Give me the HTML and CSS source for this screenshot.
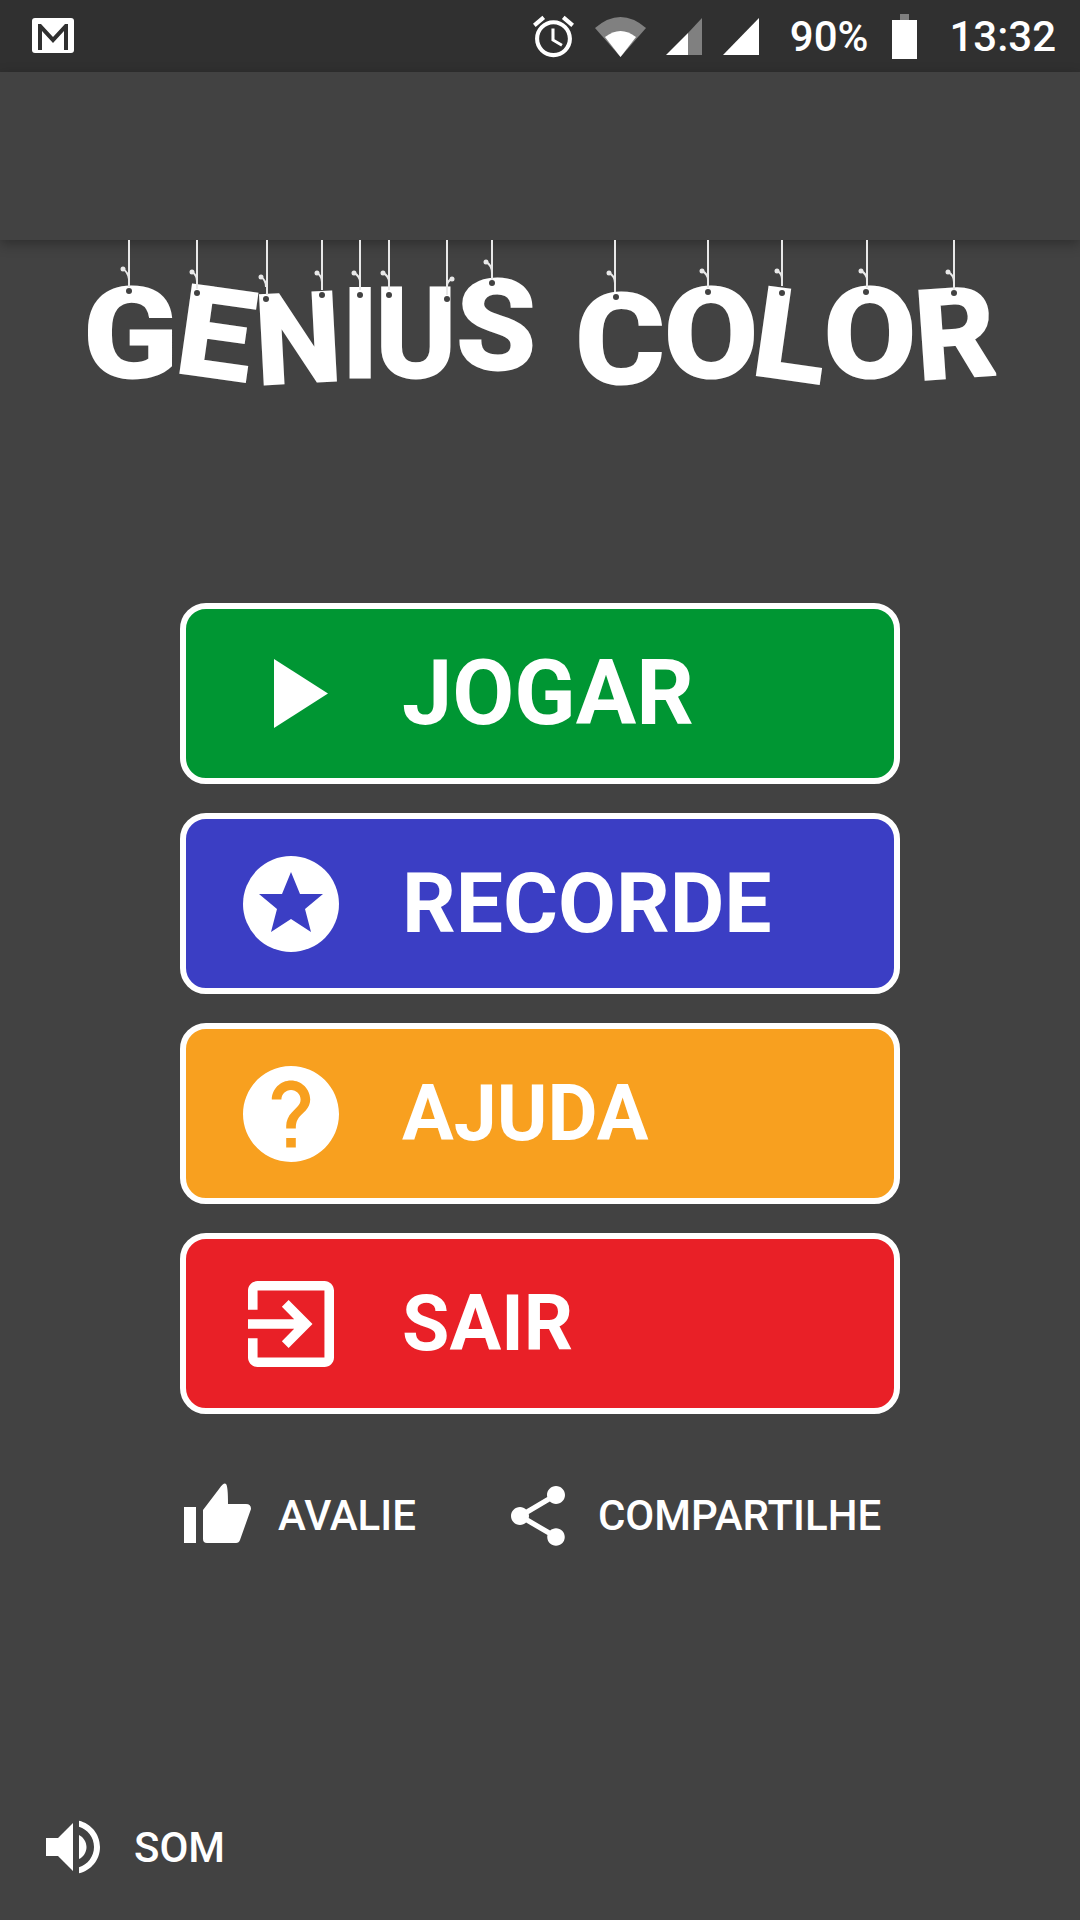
FILE: index.html
```html
<!DOCTYPE html>
<html lang="pt-BR">
<head>
    <meta charset="UTF-8">
    <meta name="viewport" content="width=device-width, initial-scale=1.0">
    <title>Genius Color</title>
    <link rel="stylesheet" href="styles.css">
</head>
<body>

    <!-- Status bar -->
    <div class="status-bar">
        <svg class="icon-gmail" viewBox="0 0 42 35">
            <rect width="42" height="35" rx="3" fill="#fff"/>
            <path d="M6 32V6h3l12 13L33 6h3v26h-4V13L21 25 10 13v19z" fill="#303030"/>
        </svg>
        <div class="status-right">
            <svg class="icon-alarm" viewBox="2 1.86 20 20.14">
                <path fill="#fff" d="M22 5.72l-4.6-3.86-1.29 1.53 4.6 3.86L22 5.72zM7.88 3.39L6.6 1.86 2 5.71l1.29 1.53 4.59-3.85zM12.5 8H11v6l4.75 2.85.75-1.23-4-2.37V8zM12 4c-4.97 0-9 4.03-9 9s4.03 9 9 9c4.97 0 9-4.03 9-9s-4.03-9-9-9zm0 16c-3.87 0-7-3.13-7-7s3.13-7 7-7 7 3.13 7 7-3.13 7-7 7z"/>
            </svg>
            <svg class="icon-wifi" viewBox="0 0 51 42">
                <path fill="#808080" d="M25.5 42L0 13Q25.5 -9 51 13z"/>
                <path fill="#fff" d="M25.5 42L10 22Q25.5 10 41 22z"/>
            </svg>
            <svg class="icon-signal" viewBox="0 0 36 37">
                <path fill="#808080" d="M36 0v37H22V15z"/>
                <path fill="#fff" d="M0 37L22 15v22z"/>
            </svg>
            <svg class="icon-signal" viewBox="0 0 36 37">
                <path fill="#fff" d="M0 37L36 0v37z"/>
            </svg>
            <span class="status-battery">90%</span>
            <svg class="icon-battery" viewBox="0 0 25 45">
                <path fill="#808080" d="M8 0h9v7H8z"/>
                <rect y="6" width="25" height="39" fill="#fff"/>
            </svg>
            <span class="status-time">13:32</span>
        </div>
    </div>

    <div class="app-bar"></div>

    <!-- Hanging letters logo -->
    <h1 class="logo">
        <span class="letter letter-g">G</span>
        <span class="letter letter-e">E</span>
        <span class="letter letter-n">N</span>
        <span class="letter letter-i">I</span>
        <span class="letter letter-u">U</span>
        <span class="letter letter-s">S</span>
        <span class="letter letter-c">C</span>
        <span class="letter letter-o">O</span>
        <span class="letter letter-l">L</span>
        <span class="letter letter-o2">O</span>
        <span class="letter letter-r">R</span>
        <svg class="threads" viewBox="0 240 1080 160">
            <g class="strings">
                <path d="M129 240V287M129 279Q128 272 123 269"/>
                <path d="M197 240V289M197 281Q197 275 192 272"/>
                <path d="M267 240V295M266 287Q266 280 261 277"/>
                <path d="M322 240V290M322 282Q322 276 317 273"/>
                <path d="M360 240V290M360 282Q360 276 354 273"/>
                <path d="M389 240V290M389 282Q389 276 383 273"/>
                <path d="M447 240V295M447 286Q447 281 452 279"/>
                <path d="M492 240V281M492 273Q492 265 486 262"/>
                <path d="M615 240V292M615 283Q615 276 609 273"/>
                <path d="M708 240V288M708 280Q708 274 702 271"/>
                <path d="M782 240V286M782 279Q782 273 777 271"/>
                <path d="M867 240V288M867 280Q867 274 861 271"/>
                <path d="M954 240V290M954 282Q954 275 948 272"/>
            </g>
            <g class="knots">
                <circle cx="123" cy="269" r="2.5"/><circle cx="192" cy="272" r="2.5"/>
                <circle cx="261" cy="277" r="2.5"/><circle cx="317" cy="273" r="2.5"/>
                <circle cx="354" cy="273" r="2.5"/><circle cx="383" cy="273" r="2.5"/>
                <circle cx="452" cy="279" r="2.5"/><circle cx="486" cy="262" r="2.5"/>
                <circle cx="609" cy="273" r="2.5"/><circle cx="702" cy="271" r="2.5"/>
                <circle cx="777" cy="271" r="2.5"/><circle cx="861" cy="271" r="2.5"/>
                <circle cx="948" cy="272" r="2.5"/>
            </g>
            <g class="holes">
                <circle cx="129" cy="291" r="3"/><circle cx="197" cy="293" r="3"/>
                <circle cx="266" cy="299" r="3"/><circle cx="322" cy="295" r="3"/>
                <circle cx="360" cy="295" r="3"/><circle cx="389" cy="295" r="3"/>
                <circle cx="447" cy="299" r="3"/><circle cx="492" cy="283" r="3"/>
                <circle cx="616" cy="297" r="3"/><circle cx="708" cy="292" r="3"/>
                <circle cx="782" cy="293" r="3"/><circle cx="866" cy="292" r="3"/>
                <circle cx="954" cy="293" r="3"/>
            </g>
        </svg>
    </h1>

    <!-- Main menu -->
    <nav class="menu">
        <a class="menu-btn btn-play" href="#">
            <span class="menu-icon">
                <svg class="icon-play" viewBox="0 0 54 69"><path fill="#fff" d="M0 0l54 34.5L0 69z"/></svg>
            </span>
            <span>JOGAR</span>
        </a>
        <a class="menu-btn btn-record" href="#">
            <span class="menu-icon">
                <svg viewBox="0 0 96 96">
                    <circle cx="48" cy="48" r="48" fill="#fff"/>
                    <path fill="#3b3ec4" d="M48 16l9 22h23L62 53l6 23-20-13-20 13 6-23-18-15h23z"/>
                </svg>
            </span>
            <span>RECORDE</span>
        </a>
        <a class="menu-btn btn-help" href="#">
            <span class="menu-icon">
                <svg viewBox="2 2 20 20"><path fill="#fff" d="M12 2C6.48 2 2 6.48 2 12s4.48 10 10 10 10-4.48 10-10S17.52 2 12 2zm1 17h-2v-2h2v2zm2.07-7.75l-.9.92C13.45 12.9 13 13.5 13 15h-2v-.5c0-1.1.45-2.1 1.17-2.83l1.24-1.26c.37-.36.59-.86.59-1.41 0-1.1-.9-2-2-2s-2 .9-2 2H8c0-2.21 1.79-4 4-4s4 1.79 4 4c0 .88-.36 1.68-.93 2.25z"/></svg>
            </span>
            <span>AJUDA</span>
        </a>
        <a class="menu-btn btn-exit" href="#">
            <span class="menu-icon">
                <svg class="icon-exit" viewBox="3 3 18 18"><path fill="#fff" d="M10.09 15.59L11.5 17l5-5-5-5-1.41 1.41L12.67 11H3v2h9.67l-2.58 2.59zM19 3H5c-1.11 0-2 .9-2 2v4h2V5h14v14H5v-4H3v4c0 1.1.89 2 2 2h14c1.1 0 2-.9 2-2V5c0-1.1-.9-2-2-2z"/></svg>
            </span>
            <span>SAIR</span>
        </a>
    </nav>

    <div class="links">
        <a class="link link-rate" href="#">
            <svg class="icon-thumb" viewBox="0 0 67 60">
                <path fill="#fff" d="M0 24h12v36H0zM19 27L35 6Q40 -1 42 1Q44 3 44 21H62Q67 21 67 26L56 57Q55 60 52 60H23Q19 60 19 56z"/>
            </svg>
            <span>AVALIE</span>
        </a>
        <a class="link link-share" href="#">
            <svg class="icon-share" viewBox="3 2 18 20"><path fill="#fff" d="M18 16.08c-.76 0-1.44.3-1.96.77L8.91 12.7c.05-.23.09-.46.09-.7s-.04-.47-.09-.7l7.05-4.11c.54.5 1.25.81 2.04.81 1.66 0 3-1.34 3-3s-1.34-3-3-3-3 1.34-3 3c0 .24.04.47.09.7L8.04 9.81C7.5 9.31 6.79 9 6 9c-1.66 0-3 1.34-3 3s1.34 3 3 3c.79 0 1.5-.31 2.04-.81l7.12 4.16c-.05.21-.08.43-.08.65 0 1.61 1.31 2.92 2.92 2.92 1.61 0 2.92-1.31 2.92-2.92s-1.31-2.92-2.92-2.92z"/></svg>
            <span>COMPARTILHE</span>
        </a>
    </div>

    <a class="sound" href="#">
        <svg class="icon-sound" viewBox="3 3 18 18"><path fill="#fff" d="M3 9v6h4l5 5V4L7 9H3zm13.5 3c0-1.77-1.02-3.29-2.5-4.03v8.05c1.48-.73 2.5-2.25 2.5-4.02zM14 3.23v2.06c2.89.86 5 3.54 5 6.71s-2.11 5.85-5 6.71v2.06c4.01-.91 7-4.49 7-8.77s-2.99-7.86-7-8.77z"/></svg>
        <span>SOM</span>
    </a>

</body>
</html>
```
FILE: styles.css
```css
/* Base styling */
body {
    font-family: 'Roboto', sans-serif;
    margin: 0;
    width: 1080px;
    height: 1920px;
    overflow: hidden;
    background: #424242;
    color: #fff;
    display: flex;
    flex-direction: column;
}

a {
    color: #fff;
    text-decoration: none;
}

svg {
    display: block;
}

/* Status bar */
.status-bar {
    height: 72px;
    background: #303030;
    display: flex;
    align-items: center;
    justify-content: space-between;
    padding: 0 24px 0 32px;
    flex-shrink: 0;
}

.status-right {
    display: flex;
    align-items: center;
    font-size: 42px;
    font-weight: 500;
}

.icon-gmail {
    width: 42px;
    height: 35px;
    margin-bottom: 1px;
}

.icon-alarm {
    width: 41px;
    height: 43px;
    margin-right: 21px;
}

.icon-wifi {
    width: 51px;
    height: 42px;
    margin-right: 20px;
}

.icon-signal {
    width: 36px;
    height: 37px;
    margin-right: 21px;
}

.status-battery {
    margin-left: 10px;
    margin-right: 24px;
}

.icon-battery {
    width: 25px;
    height: 45px;
    margin-right: 32px;
}

/* App bar */
.app-bar {
    height: 168px;
    background: #424242;
    box-shadow: 0 4px 12px rgba(0, 0, 0, 0.3);
    flex-shrink: 0;
    position: relative;
}

/* Logo */
.logo {
    position: relative;
    height: 160px;
    margin: 0;
    padding: 0 0 0 84px;
    box-sizing: border-box;
    display: flex;
    align-items: flex-start;
    font-size: 124px;
    font-weight: 700;
    line-height: 94px;
    flex-shrink: 0;
}

.letter {
    display: block;
    height: 94px;
    margin-top: 48px;
    text-align: center;
    -webkit-text-stroke: 3px #fff;
}

.letter-g { width: 93px; transform: scaleX(1.12); }
.letter-e { width: 78px; transform: rotate(8deg) scaleX(1.08); }
.letter-n { width: 88px; margin: 53px 0 0 -1px; transform: rotate(-3deg) scaleX(0.98); }
.letter-i { width: 35px; }
.letter-u { width: 81px; margin-left: -2px; transform: scaleX(0.98); }
.letter-s { width: 80px; margin-top: 40px; transform: scaleX(1.03); }
.letter-c { width: 90px; margin-top: 54px; margin-left: 39px; transform: scaleX(1.1); }
.letter-o { width: 92px; transform: scaleX(1.1); }
.letter-l { width: 68px; margin-top: 50px; transform: rotate(8deg) scaleX(1.08); }
.letter-o2 { width: 90px; transform: scaleX(1.08); }
.letter-r { width: 80px; transform: rotate(-4deg); }

.threads {
    position: absolute;
    top: 0;
    left: 0;
    width: 1080px;
    height: 160px;
}

.strings {
    fill: none;
    stroke: #e8e8e8;
    stroke-width: 2;
}

.knots {
    fill: #e8e8e8;
}

.holes {
    fill: #424242;
}

/* Menu buttons */
.menu {
    display: flex;
    flex-direction: column;
    gap: 29px;
    width: 720px;
    margin: 203px 0 0 180px;
    flex-shrink: 0;
}

.menu-btn {
    height: 181px;
    box-sizing: border-box;
    border: 6px solid #fff;
    border-radius: 26px;
    display: flex;
    align-items: center;
    gap: 63px;
    padding-left: 57px;
    font-size: 84px;
    font-weight: 700;
}

.menu-icon {
    width: 96px;
    height: 96px;
    display: flex;
    align-items: center;
    justify-content: center;
    flex-shrink: 0;
}

.menu-icon svg {
    width: 96px;
    height: 96px;
}

.menu-icon .icon-play {
    width: 54px;
    height: 69px;
    margin-left: 20px;
}

.menu-icon .icon-exit {
    width: 86px;
    height: 86px;
}

.btn-play { background: #009633; font-size: 90px; }
.btn-record { background: #3b3ec4; }
.btn-help { background: #f8a01f; font-size: 77px; }
.btn-exit { background: #e92027; font-size: 77px; }

/* Rate / share links */
.links {
    display: flex;
    margin: 69px 0 0 184px;
    font-size: 42px;
    font-weight: 500;
}

.link {
    display: flex;
    align-items: flex-start;
}

.link span {
    line-height: 60px;
    padding-top: 3px;
}

.icon-thumb {
    width: 67px;
    height: 60px;
    margin-right: 27px;
}

.link-share {
    margin-left: 95px;
}

.icon-share {
    width: 54px;
    height: 60px;
    margin-top: 3px;
    margin-right: 33px;
}

/* Sound toggle */
.sound {
    display: flex;
    align-items: center;
    margin: auto 0 46px 46px;
    font-size: 42px;
    font-weight: 500;
}

.icon-sound {
    width: 54px;
    height: 54px;
    margin-right: 34px;
}
```
